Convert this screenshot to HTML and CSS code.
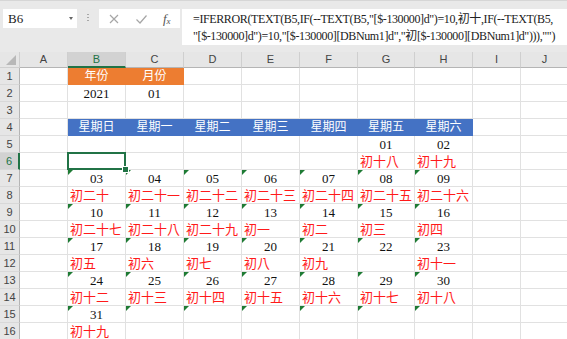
FILE: index.html
```html
<!DOCTYPE html>
<html lang="zh-Hant">
<head>
    <meta charset="UTF-8">
    <meta name="viewport" content="width=device-width, initial-scale=1.0">
    <title>農曆月曆</title>
    <link rel="stylesheet" href="styles.css">
</head>
<body>
    <div class="toolbar">
        <div class="name-box">
            <span>B6</span>
            <span class="caret"></span>
        </div>
        <div class="grip"></div>
        <div class="fn-box">
            <svg class="fn-icon" width="12" height="12" viewBox="0 0 12 12"><path d="M2 2L10 10M10 2L2 10" stroke="#a6a6a6" stroke-width="1.2" fill="none"/></svg>
            <svg class="fn-icon" width="13" height="12" viewBox="0 0 13 12"><path d="M1.5 6.5L5 10L11.5 2.5" stroke="#a6a6a6" stroke-width="1.2" fill="none"/></svg>
            <span class="fx">f<sub>x</sub></span>
        </div>
        <div class="formula">
            <div>=IFERROR(TEXT(B5,IF(--TEXT(B5,"[$-130000]d")=10,初十,IF(--TEXT(B5,</div>
            <div>"[$-130000]d")=10,"[$-130000][DBNum1]d","初[$-130000][DBNum1]d"))),"")</div>
        </div>
    </div>
    <div class="sheet" id="sheet"></div>

    <script>
        const sheet = document.getElementById('sheet');
        const letters = ['A', 'B', 'C', 'D', 'E', 'F', 'G', 'H', 'I', 'J'];
        const weekdays = ['星期日', '星期一', '星期二', '星期三', '星期四', '星期五', '星期六'];

        // B..H for every row below the weekday header
        const calendar = {
            5: ['', '', '', '', '', '01', '02'],
            6: ['', '', '', '', '', '初十八', '初十九'],
            7: ['03', '04', '05', '06', '07', '08', '09'],
            8: ['初二十', '初二十一', '初二十二', '初二十三', '初二十四', '初二十五', '初二十六'],
            9: ['10', '11', '12', '13', '14', '15', '16'],
            10: ['初二十七', '初二十八', '初二十九', '初一', '初二', '初三', '初四'],
            11: ['17', '18', '19', '20', '21', '22', '23'],
            12: ['初五', '初六', '初七', '初八', '初九', '', '初十一'],
            13: ['24', '25', '26', '27', '28', '29', '30'],
            14: ['初十二', '初十三', '初十四', '初十五', '初十六', '初十七', '初十八'],
            15: ['31', '', '', '', '', '', ''],
            16: ['初十九', '', '', '', '', '', '']
        };

        function addCell(text, classes) {
            const cell = document.createElement('div');
            cell.className = 'cell ' + classes;
            cell.textContent = text;
            sheet.appendChild(cell);
            return cell;
        }

        addCell('', 'corner');
        letters.forEach(l => addCell(l, 'col-head' + (l === 'B' ? ' active' : '')));

        for (let r = 1; r <= 16; r++) {
            addCell(r, 'row-head' + (r === 6 ? ' active' : ''));
            for (let c = 0; c < 10; c++) {
                const inCal = c >= 1 && c <= 7;
                let text = '';
                let cls = '';

                if (r === 1 && (c === 1 || c === 2)) {
                    text = c === 1 ? '年份' : '月份';
                    cls = 'orange';
                } else if (r === 2 && (c === 1 || c === 2)) {
                    text = c === 1 ? '2021' : '01';
                    cls = 'num';
                } else if (r === 4 && inCal) {
                    text = weekdays[c - 1];
                    cls = 'blue';
                } else if (calendar[r] && inCal) {
                    text = calendar[r][c - 1];
                    if (r % 2 === 1) {
                        cls = 'num';
                        if (r >= 7) cls += ' flag';
                    } else {
                        cls = 'lunar';
                    }
                }
                if (r === 6 && c === 1) cls += ' selected';
                addCell(text, cls);
            }
        }
    </script>
</body>
</html>
```

FILE: styles.css
```css
body {
    margin: 0;
    width: 567px;
    height: 339px;
    overflow: hidden;
    background: #e9e9e9;
    font-family: "Liberation Serif", "Noto Sans CJK TC", serif;
}
.toolbar {
    display: flex;
    align-items: flex-start;
    height: 52px;
    padding: 8px 0 0 3px;
    box-sizing: border-box;
    background: #e9e9e9;
    border-top: 1px solid #d6d6d6;
}
.name-box {
    display: flex;
    align-items: center;
    justify-content: space-between;
    width: 74px;
    height: 19px;
    padding: 0 4px 0 5px;
    box-sizing: border-box;
    background: #ffffff;
    font-size: 13px;
    color: #222;
}
.caret {
    width: 0;
    height: 0;
    border-left: 2px solid transparent;
    border-right: 2px solid transparent;
    border-top: 3px solid #666;
}
.grip {
    width: 2px;
    height: 9px;
    margin: 5px 10px 0 10px;
    background: repeating-linear-gradient(#a8a8a8 0 1px, transparent 1px 3px);
}
.fn-box {
    display: flex;
    align-items: center;
    justify-content: space-around;
    width: 81px;
    height: 19px;
    padding: 0 2px 0 2px;
    box-sizing: border-box;
    background: #ffffff;
}
.fn-icon {
    display: block;
}
.fx {
    font-style: italic;
    font-size: 13px;
    color: #555;
}
.fx sub {
    font-size: 9px;
    vertical-align: -1px;
}
.formula {
    flex: 1;
    height: 36px;
    margin-left: 2px;
    padding: 2px 0 0 11px;
    box-sizing: border-box;
    background: #ffffff;
    font-size: 12px;
    line-height: 17px;
    letter-spacing: -0.38px;
    color: #222;
    white-space: nowrap;
    overflow: hidden;
}
.sheet {
    display: grid;
    grid-template-columns: 20px 48px 58px 58px 58px 58px 58px 57px 58px 48px 48px;
    grid-template-rows: 16px repeat(16, 17px);
    background: #ffffff;
}
.cell {
    position: relative;
    box-sizing: border-box;
    border-right: 1px solid #e1e1e1;
    border-bottom: 1px solid #e1e1e1;
    font-size: 13px;
    line-height: 17px;
    white-space: nowrap;
    color: #111;
}
.corner,
.col-head,
.row-head {
    background: #e6e6e6;
    font-family: "Liberation Sans", sans-serif;
    font-size: 11px;
    line-height: 16px;
    color: #444;
    border-color: #cfcfcf;
}
.corner::after {
    content: "";
    position: absolute;
    right: 3px;
    bottom: 2px;
    border-left: 10px solid transparent;
    border-bottom: 10px solid #b8b8b8;
}
.col-head {
    text-align: center;
    line-height: 15px;
    border-bottom-color: #b5b5b5;
}
.row-head {
    text-align: center;
    border-right-color: #b5b5b5;
    border-bottom-color: #d8d8d8;
}
.col-head.active {
    background: #d2d2d2;
    color: #217346;
    border-bottom: 2px solid #217346;
    line-height: 14px;
}
.row-head.active {
    background: #d2d2d2;
    color: #217346;
    border-right: 2px solid #217346;
}
.orange {
    background: #ed7d31;
    border-color: #ed7d31;
    color: #ffffff;
    text-align: center;
    font-size: 12px;
    line-height: 16px;
}
.blue {
    background: #4472c4;
    border-color: #4472c4;
    color: #ffffff;
    text-align: center;
    font-size: 12px;
    line-height: 16px;
}
.num {
    text-align: center;
}
.lunar {
    padding-left: 2px;
    color: #ff1a1a;
    font-family: "Noto Sans CJK TC", sans-serif;
    line-height: 16px;
}
.flag::before {
    content: "";
    position: absolute;
    left: 0;
    top: 0;
    border-top: 5px solid #1e7b34;
    border-right: 5px solid transparent;
}
.selected::after {
    content: "";
    position: absolute;
    left: -1px;
    top: -1px;
    right: -1px;
    bottom: -1px;
    border: 2px solid #217346;
}
.selected::before {
    content: "";
    position: absolute;
    right: -4px;
    bottom: -4px;
    width: 5px;
    height: 5px;
    background: #217346;
    border: 1px solid #ffffff;
    z-index: 2;
}
```
